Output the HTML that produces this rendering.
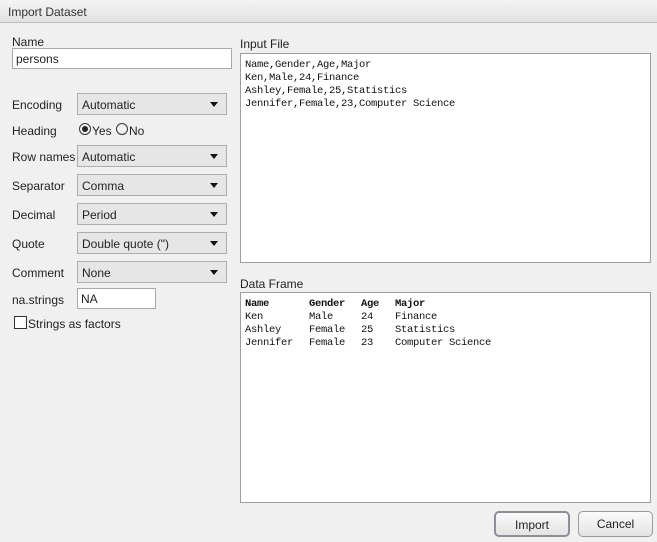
<!DOCTYPE html>
<html><head><style>
*{box-sizing:border-box;margin:0;padding:0}
body{width:657px;height:542px;background:#f0f0f0;font-family:"Liberation Sans",sans-serif;font-size:12px;color:#222;position:relative;overflow:hidden}
.a{position:absolute}
.title{left:0;top:0;width:657px;height:23px;background:linear-gradient(#f4f4f4,#e2e2e2);border-bottom:1px solid #bdbdbd;padding:5px 0 0 8px;font-size:12px;color:#333}
.inp{background:#fff;border:1px solid #a9a9a9;padding:3px 3px;font-size:12px}
.sel{left:77px;width:150px;height:22px;background:#e6e6e6;border:1px solid #adadad;padding:4px 4px;font-size:12px}
.sel:after{content:"";position:absolute;right:8px;top:8px;border-left:4px solid transparent;border-right:4px solid transparent;border-top:5px solid #111}
.lbl{left:12px}
.box{background:#fff;border:1px solid #9e9e9e;font-family:"Liberation Mono",monospace;font-size:10.5px;letter-spacing:-0.3px;line-height:13px;padding:5px 4px;color:#111}
.btn{height:26px;border:1px solid #9a9a9a;border-radius:5px;background:linear-gradient(#fafafa,#e4e4e4);text-align:center;line-height:24px;font-size:12px}
.m{position:absolute;font-family:"Liberation Mono",monospace;font-size:10.5px;letter-spacing:-0.3px;color:#111}
</style></head><body>
<div class="a title">Import Dataset</div>
<div class="a lbl" style="top:35px">Name</div>
<div class="a inp" style="left:12px;top:48px;width:220px;height:21px">persons</div>
<div class="a lbl" style="top:98px">Encoding</div>
<div class="a sel" style="top:93px">Automatic</div>
<div class="a lbl" style="top:124px">Heading</div>
<div class="a" style="left:79px;top:123px;width:12px;height:12px;border:1px solid #333;border-radius:50%"><div style="position:absolute;left:2px;top:2px;width:6px;height:6px;border-radius:50%;background:#222"></div></div>
<div class="a" style="left:92px;top:124px">Yes</div>
<div class="a" style="left:116px;top:123px;width:12px;height:12px;border:1px solid #333;border-radius:50%"></div>
<div class="a" style="left:129px;top:124px">No</div>
<div class="a lbl" style="top:150px">Row names</div>
<div class="a sel" style="top:145px">Automatic</div>
<div class="a lbl" style="top:179px">Separator</div>
<div class="a sel" style="top:174px">Comma</div>
<div class="a lbl" style="top:208px">Decimal</div>
<div class="a sel" style="top:203px">Period</div>
<div class="a lbl" style="top:237px">Quote</div>
<div class="a sel" style="top:232px">Double quote (")</div>
<div class="a lbl" style="top:266px">Comment</div>
<div class="a sel" style="top:261px">None</div>
<div class="a lbl" style="top:293px">na.strings</div>
<div class="a inp" style="left:77px;top:288px;width:79px;height:21px">NA</div>
<div class="a" style="left:14px;top:316px;width:13px;height:13px;border:1px solid #333;background:#fff"></div>
<div class="a" style="left:28px;top:317px">Strings as factors</div>
<div class="a" style="left:240px;top:37px">Input File</div>
<div class="a box" style="left:240px;top:53px;width:411px;height:210px">Name,Gender,Age,Major<br>Ken,Male,24,Finance<br>Ashley,Female,25,Statistics<br>Jennifer,Female,23,Computer Science</div>
<div class="a" style="left:240px;top:277px">Data Frame</div>
<div class="a box" style="left:240px;top:292px;width:411px;height:211px"></div>
<div class="m" style="left:245px;top:298px;line-height:13px"><b>Name</b><br>Ken<br>Ashley<br>Jennifer</div>
<div class="m" style="left:309px;top:298px;line-height:13px"><b>Gender</b><br>Male<br>Female<br>Female</div>
<div class="m" style="left:361px;top:298px;line-height:13px"><b>Age</b><br>24<br>25<br>23</div>
<div class="m" style="left:395px;top:298px;line-height:13px"><b>Major</b><br>Finance<br>Statistics<br>Computer Science</div>
<div class="a btn" style="left:494px;top:511px;width:76px;border:2px solid #8a8f99">Import</div>
<div class="a btn" style="left:578px;top:511px;width:75px">Cancel</div>
</body></html>
